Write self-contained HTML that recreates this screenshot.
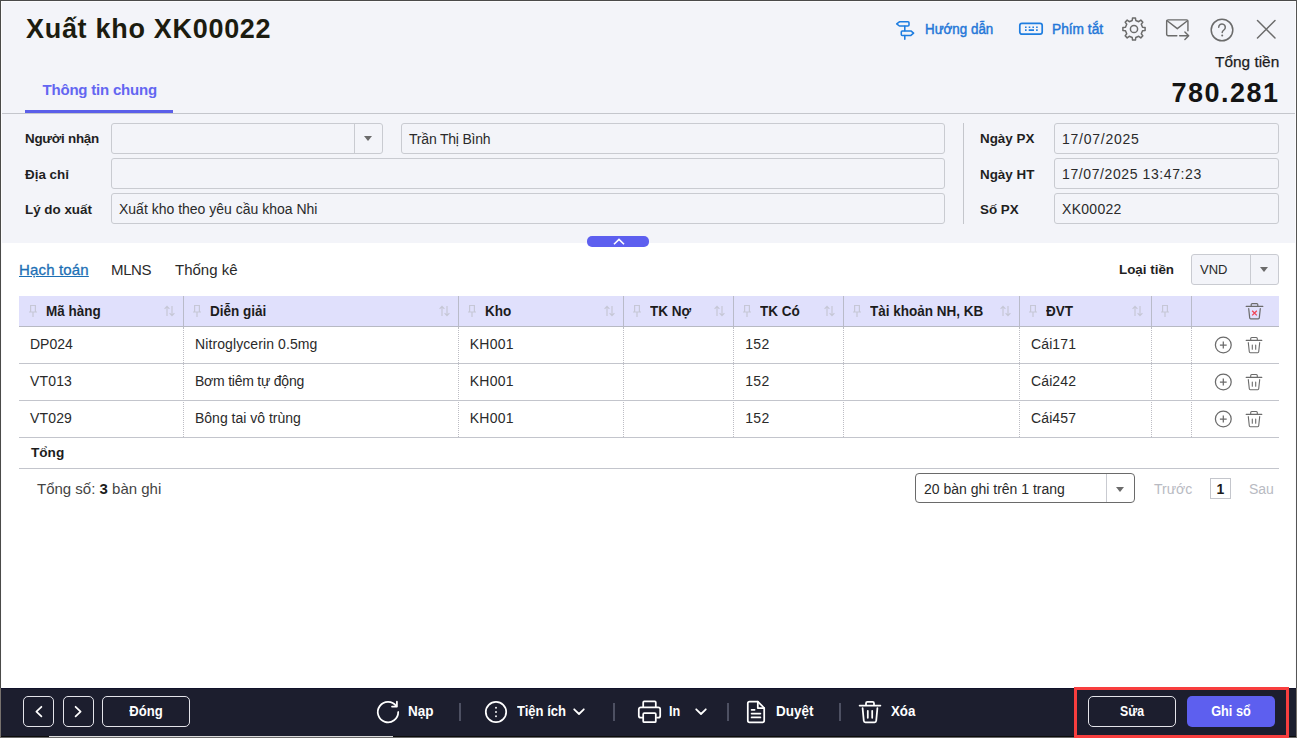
<!DOCTYPE html>
<html lang="vi">
<head>
<meta charset="utf-8">
<title>Xuất kho XK00022</title>
<style>
*{box-sizing:border-box;margin:0;padding:0}
html,body{width:1297px;height:738px;overflow:hidden;background:#fff}
body{font-family:"Liberation Sans",sans-serif;color:#1f1f1f;position:relative;font-size:14px}
.abs{position:absolute}
#frameL{left:0;top:0;width:1px;height:738px;background:linear-gradient(#4a4a48 0,#4a4a48 688px,#76716d 688px);z-index:50}
#frameT{left:0;top:0;width:1297px;height:1px;background:#4a4a4a;z-index:50}
#frameR{left:1296px;top:0;width:1px;height:738px;background:linear-gradient(#555 0,#555 688px,#76716d 688px);z-index:50}
#head{left:0;top:0;width:1297px;height:243px;background:#f3f4f9}
#title{left:26px;top:12px;font-size:27px;font-weight:bold;color:#1c1c10;letter-spacing:0.7px;line-height:34px;white-space:nowrap}
#tab{left:42.5px;top:81px;font-size:15px;font-weight:bold;color:#6366f1;letter-spacing:-0.2px;line-height:18px;white-space:nowrap}
#tabline{left:25px;top:110px;width:148px;height:3px;background:#5b5fe9}
#hsep{left:1px;top:113px;width:1295px;height:1px;background:#c4c6cc}
.lbl{font-weight:bold;font-size:13.4px;color:#1f1f1f;line-height:18px;white-space:nowrap}
.inp{border:1px solid #c9cbd1;border-radius:3px;background:#f3f4f9;height:31px;font-size:14px;line-height:30px;padding-left:7px;color:#2a2a2a;white-space:nowrap;overflow:hidden}
.tool{font-size:14px;font-weight:bold;color:#2477d8;white-space:nowrap;line-height:18px}

#inner{left:1px;top:1px;width:1295px;height:1px;background:#fbfbfd;z-index:49}
#innerL{left:1px;top:1px;width:1px;height:687px;background:#fbfbfd;z-index:49}
.gi{stroke:#6b6b6b;fill:none;stroke-width:1.5;stroke-linecap:round;stroke-linejoin:round}
#tt{right:17.800px;top:52.800px;font-size:15.400px;color:#1c1c1c;-webkit-text-stroke:0.25px #1c1c1c;line-height:18px;white-space:nowrap}
#tv{right:17.500px;top:75.700px;font-size:27px;font-weight:bold;color:#141414;line-height:34px;letter-spacing:1.5px;white-space:nowrap}
#coll{left:587px;top:236px;width:62px;height:11px;border-radius:5px;background:#5d5fef}
.stab{font-size:15px;line-height:18px;color:#2a2a2a;white-space:nowrap}
.th{position:absolute;top:296px;height:30px;background:#e0e0fc}
.thl{position:absolute;top:296px;width:1px;height:31px;background:#b9bbc9}
.tht{position:absolute;top:301.500px;font-size:14px;margin-left:0.500px;transform-origin:0 0;transform:scaleX(0.965);font-weight:bold;line-height:18px;color:#1c1c1c;white-space:nowrap}
.vd{position:absolute;top:327px;width:0;height:110px;border-left:1px dotted #bdbdc4}
.hl{position:absolute;left:19px;width:1260px;height:1px;background:#c3c5cc}
.td{position:absolute;font-size:14px;line-height:18px;color:#2a2a2a;white-space:nowrap}
#foot{left:0;top:688px;width:1297px;height:50px;background:#1c1e2e;border-top:1px solid #10122a}
.fb{position:absolute;top:696px;height:31px;border:1px solid #e4e4ea;border-radius:5px}
.ft{position:absolute;top:702px;font-size:14px;font-weight:bold;color:#fff;line-height:18px;white-space:nowrap}
.fs{position:absolute;top:703px;width:2px;height:18px;background:#4d5062;margin-left:-1px}
.wi{stroke:#fff;fill:none;stroke-width:1.75;stroke-linecap:round;stroke-linejoin:round}
</style>
</head>
<body>
<div id="head" class="abs"></div>
<div id="title" class="abs">Xuất kho XK00022</div>
<div id="tab" class="abs">Thông tin chung</div>
<div id="tabline" class="abs"></div>
<div id="hsep" class="abs"></div>

<!-- top toolbar -->
<svg class="abs" style="left:894px;top:19px" width="24" height="24" viewBox="0 0 24 24" fill="none" stroke="#1e7de0" stroke-width="1.550" stroke-linejoin="round" stroke-linecap="round">
<path d="M5.400 2.800h8.600a1 1 0 0 1 1 1v2.200a1 1 0 0 1-1 1H5.400L2.700 4.900z"/>
<path d="M8.300 11.900h8.600l2.700 2.250-2.700 2.250H8.300a1 1 0 0 1-1-1v-2.500a1 1 0 0 1 1-1z"/>
<path d="M10.800 7.200v4.500M10.800 16.600v3.700"/>
</svg>
<div class="abs tool" style="left:925px;top:20px;transform-origin:0 0;transform:scaleX(0.955);font-weight:normal;-webkit-text-stroke:0.45px #2477d8">Hướng dẫn</div>
<svg class="abs" style="left:1018.300px;top:21.300px" width="26" height="16" viewBox="0 0 26 16" fill="none" stroke="#1e7de0" stroke-width="1.7" stroke-linejoin="round" stroke-linecap="round">
<rect x="1.800" y="2.400" width="22.400" height="10.800" rx="2.200"/>
<path d="M7 6.300h1.600M10.700 6.300h1.600M14.400 6.300h1.600M18.100 6.300h1.600M7 9.100h1.600M10.700 9.100h5.300M18.100 9.100h1.600" stroke-width="1.600" stroke-linecap="butt"/>
</svg>
<div class="abs tool" style="left:1052px;top:20px;transform-origin:0 0;transform:scaleX(0.98);font-weight:normal;-webkit-text-stroke:0.45px #2477d8">Phím tắt</div>
<!-- gear -->
<svg class="abs" style="left:1121px;top:16px" width="26" height="26" viewBox="0 0 26 26">
<circle class="gi" stroke-width="1.400" cx="13" cy="13" r="3.600"/>
<path class="gi" stroke-width="1.400" d="M11.22 4.48 L11.56 1.89 L14.44 1.89 L14.78 4.48 L17.76 5.72 L19.84 4.13 L21.87 6.16 L20.28 8.24 L21.52 11.22 L24.11 11.56 L24.11 14.44 L21.52 14.78 L20.28 17.76 L21.87 19.84 L19.84 21.87 L17.76 20.28 L14.78 21.52 L14.44 24.11 L11.56 24.11 L11.22 21.52 L8.24 20.28 L6.16 21.87 L4.13 19.84 L5.72 17.76 L4.48 14.78 L1.89 14.44 L1.89 11.56 L4.48 11.22 L5.72 8.24 L4.13 6.16 L6.16 4.13 L8.24 5.72Z"/>
</svg>
<!-- mail -->
<svg class="abs" style="left:1164.300px;top:17.300px" width="26.600" height="24.700" viewBox="0 0 28 26">
<path class="gi" d="M13.500 19.700H4.300a1.500 1.500 0 0 1-1.500-1.500V4.500A1.500 1.500 0 0 1 4.300 3h19.400a1.500 1.500 0 0 1 1.500 1.500v10"/>
<path class="gi" d="M3.300 4l10.700 8.300L24.700 4"/>
<path class="gi" d="M16.500 19.700h9M22 15.700l4 4-4 4"/>
</svg>
<!-- help -->
<svg class="abs" style="left:1209px;top:17px" width="26" height="26" viewBox="0 0 26 26">
<circle class="gi" cx="13" cy="13" r="10.800"/>
<path class="gi" d="M9.700 10.300a3.300 3.300 0 1 1 5.200 2.700c-1 .7-1.700 1.300-1.700 2.500"/>
<circle cx="13.200" cy="18.600" r="1" fill="#6b6b6b"/>
</svg>
<!-- close -->
<svg class="abs" style="left:1254px;top:17px" width="24" height="24" viewBox="0 0 24 24">
<path class="gi" stroke-linecap="butt" d="M3.500 3.500l17.500 17.500M21 3.500L3.500 21"/>
</svg>
<div id="tt" class="abs">Tổng tiền</div>
<div id="tv" class="abs">780.281</div>

<!-- collapse -->
<div id="coll" class="abs"></div>
<svg class="abs" style="left:611px;top:236px" width="16" height="11" viewBox="0 0 16 11"><path d="M3 8.300L8 3.400l5 4.900" fill="none" stroke="#fff" stroke-width="1.600"/></svg>

<!-- form -->
<div class="abs lbl" style="left:25px;top:130px;letter-spacing:-0.25px">Người nhận</div>
<div class="abs lbl" style="left:25px;top:166px">Địa chỉ</div>
<div class="abs lbl" style="left:25px;top:201px">Lý do xuất</div>
<div class="abs inp" style="left:111px;top:123px;width:272px"></div>
<div class="abs" style="left:354px;top:124px;width:1px;height:29px;background:#c9cbd1"></div>
<div class="abs" style="left:363px;top:136px;width:0;height:0;border-left:4.500px solid transparent;border-right:4.500px solid transparent;border-top:5.500px solid #6b6b6b;margin-left:0.500px"></div>
<div class="abs inp" style="left:401px;top:123px;width:544px;letter-spacing:-0.2px">Trần Thị Bình</div>
<div class="abs inp" style="left:111px;top:158px;width:834px"></div>
<div class="abs inp" style="left:111px;top:193px;width:834px">Xuất kho theo yêu cầu khoa Nhi</div>
<div class="abs" style="left:963px;top:123px;width:1px;height:101px;background:#c4c6cc"></div>
<div class="abs lbl" style="left:980px;top:130px">Ngày PX</div>
<div class="abs lbl" style="left:980px;top:166px">Ngày HT</div>
<div class="abs lbl" style="left:980px;top:201px">Số PX</div>
<div class="abs inp" style="left:1054px;top:123px;width:225px;letter-spacing:0.75px">17/07/2025</div>
<div class="abs inp" style="left:1054px;top:158px;width:225px;letter-spacing:0.6px">17/07/2025 13:47:23</div>
<div class="abs inp" style="left:1054px;top:193px;width:225px;letter-spacing:0.3px">XK00022</div>

<!-- sub tabs -->
<div class="abs stab" style="left:19px;top:261px;color:#1c6fb5;text-decoration:underline;letter-spacing:0.16px;-webkit-text-stroke:0.3px #1c6fb5">Hạch toán</div>
<div class="abs stab" style="left:111px;top:261px;letter-spacing:-0.37px">MLNS</div>
<div class="abs stab" style="left:175px;top:261px">Thống kê</div>
<div class="abs lbl" style="left:1119px;top:261px">Loại tiền</div>
<div class="abs inp" style="left:1191px;top:254px;width:88px;height:31px;padding-left:8px;font-size:13px">VND</div>
<div class="abs" style="left:1250px;top:255px;width:1px;height:29px;background:#c9cbd1"></div>
<div class="abs" style="left:1259px;top:267px;width:0;height:0;border-left:4.500px solid transparent;border-right:4.500px solid transparent;border-top:5.500px solid #6b6b6b;margin-left:0.500px"></div>
<!-- table -->
<div class="th" style="left:19px;width:1260px"></div>
<div class="thl" style="left:183px"></div>
<div class="vd" style="left:183px"></div>
<div class="thl" style="left:458px"></div>
<div class="vd" style="left:458px"></div>
<div class="thl" style="left:623px"></div>
<div class="vd" style="left:623px"></div>
<div class="thl" style="left:733px"></div>
<div class="vd" style="left:733px"></div>
<div class="thl" style="left:843px"></div>
<div class="vd" style="left:843px"></div>
<div class="thl" style="left:1019px"></div>
<div class="vd" style="left:1019px"></div>
<div class="thl" style="left:1151px"></div>
<div class="vd" style="left:1151px"></div>
<div class="thl" style="left:1191px"></div>
<div class="vd" style="left:1191px"></div>
<svg style="position:absolute;left:27.5px;top:304px" width="10" height="14" viewBox="0 0 10 14"><path d="M2.600 1.500h4.800v6.500h-4.800zM1 8h8M5 8v5" fill="none" stroke="#c6c7d6" stroke-width="1.200"/></svg>
<div class="tht" style="left:45px">Mã hàng</div>
<svg style="position:absolute;left:164px;top:305px" width="12" height="12" viewBox="0 0 12 12"><path d="M3 11V1.500M0.600 3.800L3 1.300l2.400 2.500M8 1v9.500M5.600 8.200L8 10.700l2.400-2.500" fill="none" stroke="#c6c7d6" stroke-width="1.200"/></svg>
<svg style="position:absolute;left:191.5px;top:304px" width="10" height="14" viewBox="0 0 10 14"><path d="M2.600 1.500h4.800v6.500h-4.800zM1 8h8M5 8v5" fill="none" stroke="#c6c7d6" stroke-width="1.200"/></svg>
<div class="tht" style="left:209px">Diễn giải</div>
<svg style="position:absolute;left:439px;top:305px" width="12" height="12" viewBox="0 0 12 12"><path d="M3 11V1.500M0.600 3.800L3 1.300l2.400 2.500M8 1v9.500M5.600 8.200L8 10.700l2.400-2.500" fill="none" stroke="#c6c7d6" stroke-width="1.200"/></svg>
<svg style="position:absolute;left:466.5px;top:304px" width="10" height="14" viewBox="0 0 10 14"><path d="M2.600 1.500h4.800v6.500h-4.800zM1 8h8M5 8v5" fill="none" stroke="#c6c7d6" stroke-width="1.200"/></svg>
<div class="tht" style="left:484px">Kho</div>
<svg style="position:absolute;left:604px;top:305px" width="12" height="12" viewBox="0 0 12 12"><path d="M3 11V1.500M0.600 3.800L3 1.300l2.400 2.500M8 1v9.500M5.600 8.200L8 10.700l2.400-2.500" fill="none" stroke="#c6c7d6" stroke-width="1.200"/></svg>
<svg style="position:absolute;left:631.5px;top:304px" width="10" height="14" viewBox="0 0 10 14"><path d="M2.600 1.500h4.800v6.500h-4.800zM1 8h8M5 8v5" fill="none" stroke="#c6c7d6" stroke-width="1.200"/></svg>
<div class="tht" style="left:649px">TK Nợ</div>
<svg style="position:absolute;left:714px;top:305px" width="12" height="12" viewBox="0 0 12 12"><path d="M3 11V1.500M0.600 3.800L3 1.300l2.400 2.500M8 1v9.500M5.600 8.200L8 10.700l2.400-2.500" fill="none" stroke="#c6c7d6" stroke-width="1.200"/></svg>
<svg style="position:absolute;left:741.5px;top:304px" width="10" height="14" viewBox="0 0 10 14"><path d="M2.600 1.500h4.800v6.500h-4.800zM1 8h8M5 8v5" fill="none" stroke="#c6c7d6" stroke-width="1.200"/></svg>
<div class="tht" style="left:759px">TK Có</div>
<svg style="position:absolute;left:824px;top:305px" width="12" height="12" viewBox="0 0 12 12"><path d="M3 11V1.500M0.600 3.800L3 1.300l2.400 2.500M8 1v9.500M5.600 8.200L8 10.700l2.400-2.500" fill="none" stroke="#c6c7d6" stroke-width="1.200"/></svg>
<svg style="position:absolute;left:851.5px;top:304px" width="10" height="14" viewBox="0 0 10 14"><path d="M2.600 1.500h4.800v6.500h-4.800zM1 8h8M5 8v5" fill="none" stroke="#c6c7d6" stroke-width="1.200"/></svg>
<div class="tht" style="left:869px">Tài khoản NH, KB</div>
<svg style="position:absolute;left:1000px;top:305px" width="12" height="12" viewBox="0 0 12 12"><path d="M3 11V1.500M0.600 3.800L3 1.300l2.400 2.500M8 1v9.500M5.600 8.200L8 10.700l2.400-2.500" fill="none" stroke="#c6c7d6" stroke-width="1.200"/></svg>
<svg style="position:absolute;left:1027.5px;top:304px" width="10" height="14" viewBox="0 0 10 14"><path d="M2.600 1.500h4.800v6.500h-4.800zM1 8h8M5 8v5" fill="none" stroke="#c6c7d6" stroke-width="1.200"/></svg>
<div class="tht" style="left:1045px">ĐVT</div>
<svg style="position:absolute;left:1132px;top:305px" width="12" height="12" viewBox="0 0 12 12"><path d="M3 11V1.500M0.600 3.800L3 1.300l2.400 2.500M8 1v9.500M5.600 8.200L8 10.700l2.400-2.500" fill="none" stroke="#c6c7d6" stroke-width="1.200"/></svg>
<svg style="position:absolute;left:1159.5px;top:304px" width="10" height="14" viewBox="0 0 10 14"><path d="M2.600 1.500h4.800v6.500h-4.800zM1 8h8M5 8v5" fill="none" stroke="#c6c7d6" stroke-width="1.200"/></svg>
<svg style="position:absolute;left:1244px;top:301px" width="21" height="20" viewBox="0 0 21 20"><path d="M2.200 5.400h16.600M7.200 5.200V3.600a1 1 0 0 1 1-1h4.600a1 1 0 0 1 1 1v1.600M4.700 7.600l1 9.300a1 1 0 0 0 1 .9h7.600a1 1 0 0 0 1-.9l1-9.300" fill="none" stroke="#6b6b6b" stroke-width="1.200" stroke-linecap="round"/><path d="M8.200 9.800l4.600 4.600M12.800 9.800l-4.600 4.600" stroke="#f04455" stroke-width="1.300" fill="none"/></svg>
<div class="hl" style="top:326px;background:#b7b9c3"></div>
<div class="hl" style="top:363px"></div>
<div class="hl" style="top:400px"></div>
<div class="hl" style="top:437px"></div>
<div class="hl" style="top:468px"></div>
<div class="td" style="left:30px;top:335px">DP024</div>
<div class="td" style="left:195px;top:335px;letter-spacing:0.1px">Nitroglycerin 0.5mg</div>
<div class="td" style="left:469.700px;top:335px;letter-spacing:0.28px">KH001</div>
<div class="td" style="left:745.300px;top:335px;letter-spacing:0.28px">152</div>
<div class="td" style="left:1031px;top:335px;letter-spacing:0.12px">Cái171</div>
<svg style="position:absolute;left:1213px;top:335px" width="20" height="20" viewBox="0 0 20 20"><circle cx="10.300" cy="10" r="7.900" fill="none" stroke="#6b6b6b" stroke-width="1.250"/><path d="M6.900 10h6.800M10.300 6.600v6.800" stroke="#6b6b6b" stroke-width="1.250" fill="none"/></svg>
<svg style="position:absolute;left:1244px;top:335px" width="21" height="20" viewBox="0 0 21 20"><path d="M2.200 5.400h15.600M6.700 5.200V3.500a1 1 0 0 1 1-1h4.600a1 1 0 0 1 1 1v1.700M4.300 7.600l1 9.200a1 1 0 0 0 1 .9h7.400a1 1 0 0 0 1-.9l1-9.200M8.300 10v4.200M11.700 10v4.200" fill="none" stroke="#6b6b6b" stroke-width="1.100" stroke-linecap="round"/></svg>
<div class="td" style="left:30px;top:372px;letter-spacing:0.15px">VT013</div>
<div class="td" style="left:195px;top:372px;letter-spacing:-0.23px">Bơm tiêm tự động</div>
<div class="td" style="left:469.700px;top:372px;letter-spacing:0.28px">KH001</div>
<div class="td" style="left:745.300px;top:372px;letter-spacing:0.28px">152</div>
<div class="td" style="left:1031px;top:372px;letter-spacing:0.12px">Cái242</div>
<svg style="position:absolute;left:1213px;top:372px" width="20" height="20" viewBox="0 0 20 20"><circle cx="10.300" cy="10" r="7.900" fill="none" stroke="#6b6b6b" stroke-width="1.250"/><path d="M6.900 10h6.800M10.300 6.600v6.800" stroke="#6b6b6b" stroke-width="1.250" fill="none"/></svg>
<svg style="position:absolute;left:1244px;top:372px" width="21" height="20" viewBox="0 0 21 20"><path d="M2.200 5.400h15.600M6.700 5.200V3.500a1 1 0 0 1 1-1h4.600a1 1 0 0 1 1 1v1.700M4.300 7.600l1 9.200a1 1 0 0 0 1 .9h7.400a1 1 0 0 0 1-.9l1-9.200M8.300 10v4.200M11.700 10v4.200" fill="none" stroke="#6b6b6b" stroke-width="1.100" stroke-linecap="round"/></svg>
<div class="td" style="left:30px;top:409px;letter-spacing:0.15px">VT029</div>
<div class="td" style="left:195px;top:409px">Bông tai vô trùng</div>
<div class="td" style="left:469.700px;top:409px;letter-spacing:0.28px">KH001</div>
<div class="td" style="left:745.300px;top:409px;letter-spacing:0.28px">152</div>
<div class="td" style="left:1031px;top:409px;letter-spacing:0.12px">Cái457</div>
<svg style="position:absolute;left:1213px;top:409px" width="20" height="20" viewBox="0 0 20 20"><circle cx="10.300" cy="10" r="7.900" fill="none" stroke="#6b6b6b" stroke-width="1.250"/><path d="M6.900 10h6.800M10.300 6.600v6.800" stroke="#6b6b6b" stroke-width="1.250" fill="none"/></svg>
<svg style="position:absolute;left:1244px;top:409px" width="21" height="20" viewBox="0 0 21 20"><path d="M2.200 5.400h15.600M6.700 5.200V3.500a1 1 0 0 1 1-1h4.600a1 1 0 0 1 1 1v1.700M4.300 7.600l1 9.200a1 1 0 0 0 1 .9h7.400a1 1 0 0 0 1-.9l1-9.200M8.300 10v4.200M11.700 10v4.200" fill="none" stroke="#6b6b6b" stroke-width="1.100" stroke-linecap="round"/></svg>
<div class="abs" style="left:31px;top:444px;font-size:13.600px;font-weight:bold;line-height:18px;color:#1c1c1c">Tổng</div>
<div class="abs" style="left:37px;top:480px;font-size:15px;line-height:18px;color:#444;white-space:nowrap">Tổng số: <b style="color:#1c1c1c">3</b> bàn ghi</div>
<div class="abs" style="left:915px;top:473px;width:220px;height:30px;border:1px solid #6a6a6a;border-radius:4px;font-size:14px;line-height:31px;padding-left:8px;color:#2a2a2a;white-space:nowrap">20 bàn ghi trên 1 trang</div>
<div class="abs" style="left:1106px;top:474px;width:1px;height:28px;background:#c9cbd1"></div>
<div class="abs" style="left:1115px;top:487px;width:0;height:0;border-left:4.500px solid transparent;border-right:4.500px solid transparent;border-top:5.500px solid #6b6b6b;margin-left:0.500px"></div>
<div class="abs" style="left:1154px;top:480px;font-size:14px;line-height:18px;color:#b8bac2;white-space:nowrap">Trước</div>
<div class="abs" style="left:1210px;top:478px;width:21px;height:21px;border:1px solid #c4c6cc;font-size:14px;font-weight:bold;line-height:20px;text-align:center;color:#1c1c1c">1</div>
<div class="abs" style="left:1249px;top:480px;font-size:14px;line-height:18px;color:#b8bac2;white-space:nowrap">Sau</div>
<!-- footer -->
<div id="foot" class="abs"></div>
<div class="fb" style="left:23px;width:31px"></div>
<svg class="abs" style="left:23px;top:696px" width="31" height="31" viewBox="0 0 31 31"><path class="wi" stroke-linecap="butt" stroke-linejoin="miter" d="M18.400 10.800l-5 4.800 5 4.800"/></svg>
<div class="fb" style="left:63px;width:30.500px"></div>
<svg class="abs" style="left:63px;top:696px" width="31" height="31" viewBox="0 0 31 31"><path class="wi" stroke-linecap="butt" stroke-linejoin="miter" d="M12.600 10.800l5 4.800-5 4.800"/></svg>
<div class="fb" style="left:102px;width:88px"></div>
<div class="ft" style="left:102px;width:88px;text-align:center;transform:scaleX(0.935)">Đóng</div>
<!-- reload -->
<svg class="abs" style="left:375px;top:698.500px" width="26" height="26" viewBox="0 0 26 26"><path class="wi" d="M21.300 7.200A10.200 10.200 0 1 0 23.200 13"/><path class="wi" d="M17 7.600h4.900V2.700"/></svg>
<div class="ft" style="left:408px;transform-origin:0 0;transform:scaleX(0.965)">Nạp</div>
<div class="fs" style="left:460px"></div>
<!-- utilities -->
<svg class="abs" style="left:483px;top:699px" width="26" height="26" viewBox="0 0 26 26"><circle class="wi" cx="13" cy="13" r="10.200"/><circle cx="13" cy="8.800" r="0.950" fill="#fff"/><circle cx="13" cy="13" r="0.950" fill="#fff"/><circle cx="13" cy="17.200" r="0.950" fill="#fff"/></svg>
<div class="ft" style="left:517px;transform-origin:0 0;transform:scaleX(0.932)">Tiện ích</div>
<svg class="abs" style="left:572px;top:705px" width="14" height="14" viewBox="0 0 14 14"><path class="wi" stroke-linecap="butt" stroke-linejoin="miter" d="M2.200 4.300L7 9l4.800-4.700"/></svg>
<div class="fs" style="left:614px"></div>
<!-- print -->
<svg class="abs" style="left:637px;top:699px" width="26" height="26" viewBox="0 0 26 26"><path class="wi" d="M6.200 8.200V3.400a1 1 0 0 1 1-1h10.600a1 1 0 0 1 1 1v4.800"/><path class="wi" d="M6 18.700H3.800a2 2 0 0 1-2-2v-6.400a2 2 0 0 1 2-2h17.400a2 2 0 0 1 2 2v6.400a2 2 0 0 1-2 2H20"/><rect class="wi" x="6.200" y="14.200" width="12.600" height="9" rx="1"/></svg>
<div class="ft" style="left:669px;transform-origin:0 0;transform:scaleX(0.9)">In</div>
<svg class="abs" style="left:694px;top:705px" width="14" height="14" viewBox="0 0 14 14"><path class="wi" stroke-linecap="butt" stroke-linejoin="miter" d="M2.200 4.300L7 9l4.800-4.700"/></svg>
<div class="fs" style="left:728px"></div>
<!-- doc -->
<svg class="abs" style="left:743px;top:699px" width="26" height="26" viewBox="0 0 26 26"><path class="wi" d="M14.800 2.600H6.600a1.800 1.800 0 0 0-1.800 1.800v17.200a1.800 1.800 0 0 0 1.800 1.800h12.800a1.800 1.800 0 0 0 1.800-1.800V9z"/><path class="wi" d="M14.800 2.600V9h6.400"/><path class="wi" d="M8.600 10.800h3M8.600 14.600h8.800M8.600 18.400h8.800" stroke-width="1.500"/></svg>
<div class="ft" style="left:776px;transform-origin:0 0;transform:scaleX(0.962)">Duyệt</div>
<div class="fs" style="left:840px"></div>
<!-- trash -->
<svg class="abs" style="left:857px;top:699px" width="26" height="26" viewBox="0 0 26 26"><path class="wi" d="M2.600 6.600h20.800M9 6.400V4.200a1.400 1.400 0 0 1 1.400-1.400h5.200A1.400 1.400 0 0 1 17 4.200v2.200M5.600 9.200l1.200 12.600a1.600 1.600 0 0 0 1.600 1.500h9.200a1.600 1.600 0 0 0 1.600-1.500l1.200-12.600M10.800 11.800v7M15.200 11.800v7"/></svg>
<div class="ft" style="left:891px;transform-origin:0 0;transform:scaleX(0.95)">Xóa</div>
<!-- right buttons -->
<div class="fb" style="left:1088px;width:88px"></div>
<div class="ft" style="left:1088px;width:88px;text-align:center;transform:scaleX(0.88)">Sửa</div>
<div class="abs" style="left:1187px;top:696px;width:88px;height:31px;border-radius:5px;background:#5d5fef"></div>
<div class="ft" style="left:1187px;width:88px;text-align:center;transform:scaleX(0.91)">Ghi sổ</div>
<!-- bottom strip -->
<div class="abs" style="left:0;top:736px;width:1297px;height:1px;background:#0c0c0c"></div>
<div class="abs" style="left:49px;top:736px;width:344px;height:1px;background:#dcdcdc"></div>
<div class="abs" style="left:0;top:737px;width:1297px;height:1px;background:#6a6a6a"></div>
<div class="abs" style="left:1074px;top:687px;width:215px;height:51px;border:3px solid #f83e3e"></div>
<div id="inner" class="abs"></div>
<div id="innerL" class="abs"></div>
<div class="abs" style="left:1295px;top:1px;width:1px;height:687px;background:#fbfbfd;z-index:49"></div>
<div id="frameL" class="abs"></div>
<div id="frameT" class="abs"></div>
<div id="frameR" class="abs"></div>
</body>
</html>
